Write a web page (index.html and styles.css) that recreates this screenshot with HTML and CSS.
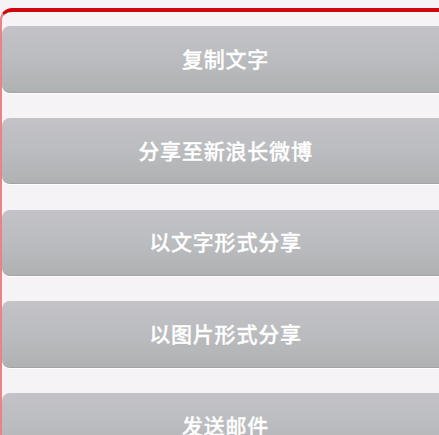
FILE: index.html
```html
<!DOCTYPE html>
<html lang="zh-CN">
<head>
<meta charset="utf-8">
<link rel="stylesheet" href="styles.css">
</head>
<body>
<div class="frame">
  <div class="menu">
    <div class="btn">复制文字</div>
    <div class="btn">分享至新浪长微博</div>
    <div class="btn">以文字形式分享</div>
    <div class="btn">以图片形式分享</div>
    <div class="btn">发送邮件</div>
  </div>
</div>
</body>
</html>
```
FILE: styles.css
```css
html, body {
  margin: 0;
  padding: 0;
  height: 100%;
  overflow: hidden;
  background: #f5f3f5;
}
.frame {
  margin-top: 8px;
  border-top: 4px solid #d0060f;
  border-left: 2px solid #e8838a;
  border-top-left-radius: 12px;
  height: 500px;
  padding-top: 14px;
}
.menu {
  display: flex;
  flex-direction: column;
  gap: 25.25px;
  margin-right: -20px;
}
.btn {
  box-sizing: border-box;
  height: 66.5px;
  border-radius: 8px;
  background: linear-gradient(to bottom, #c3c3c7 0%, #bbbcbf 50%, #afb1b3 100%);
  border-bottom: 1px solid #a2a4a6;
  box-shadow: 0 1px 0 #ffffff;
  display: flex;
  align-items: center;
  justify-content: center;
  padding-right: 10px;
  padding-bottom: 2px;
  color: #ffffff;
  font-family: "Noto Sans CJK SC", "Noto Sans", sans-serif;
  font-size: 21px;
  font-weight: 500;
  -webkit-text-stroke: 0.45px #ffffff;
  letter-spacing: 0.8px;
  text-shadow: 0 0 1px rgba(0,0,0,0.2);
}
```
